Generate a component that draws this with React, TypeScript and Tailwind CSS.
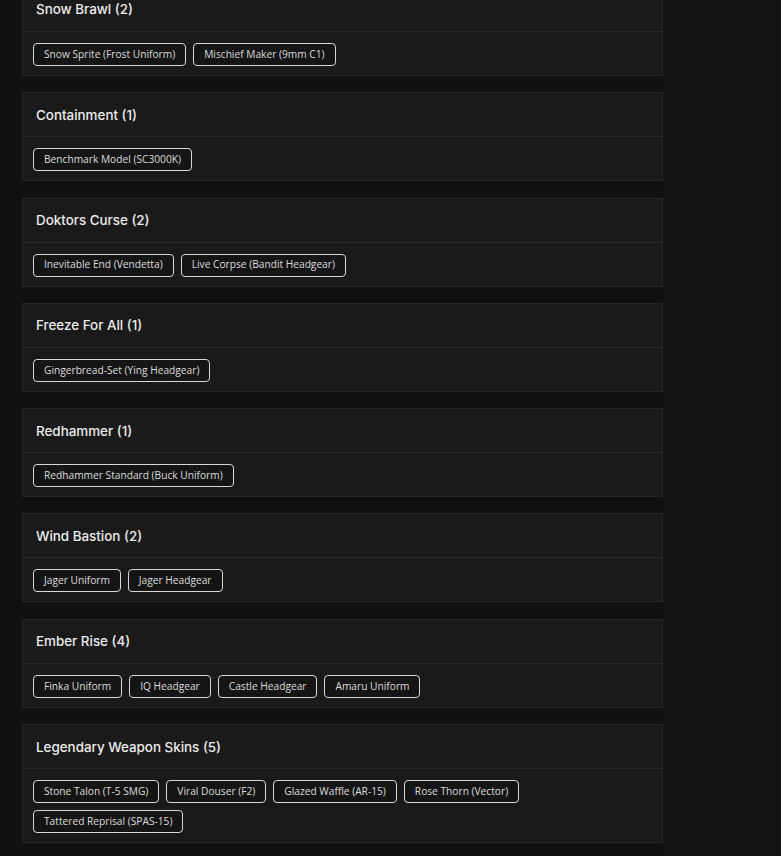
import React from "react";

const groups: { title: string; items: string[] }[] = [
  { title: "Snow Brawl (2)", items: ["Snow Sprite (Frost Uniform)", "Mischief Maker (9mm C1)"] },
  { title: "Containment (1)", items: ["Benchmark Model (SC3000K)"] },
  { title: "Doktors Curse (2)", items: ["Inevitable End (Vendetta)", "Live Corpse (Bandit Headgear)"] },
  { title: "Freeze For All (1)", items: ["Gingerbread-Set (Ying Headgear)"] },
  { title: "Redhammer (1)", items: ["Redhammer Standard (Buck Uniform)"] },
  { title: "Wind Bastion (2)", items: ["Jager Uniform", "Jager Headgear"] },
  { title: "Ember Rise (4)", items: ["Finka Uniform", "IQ Headgear", "Castle Headgear", "Amaru Uniform"] },
  {
    title: "Legendary Weapon Skins (5)",
    items: [
      "Stone Talon (T-5 SMG)",
      "Viral Douser (F2)",
      "Glazed Waffle (AR-15)",
      "Rose Thorn (Vector)",
      "Tattered Reprisal (SPAS-15)",
    ],
  },
];

export default function App() {
  return (
    <div
      className="h-[856px] overflow-hidden bg-[#131313] flex"
      style={{ fontFamily: '"Open Sans", "Noto Sans", sans-serif' }}
    >
      <div className="w-[663px] bg-[#111111] pl-[22px] -mt-[13px] flex flex-col gap-[16.3px]">
        {groups.map((g) => (
          <div key={g.title} className="border border-[#262626] bg-[#1a1a1a]">
            <div className="h-[44px] flex items-center px-[13px] border-b border-[#2a2a2a]">
              <span
                className="text-[13.4px] font-medium text-[#ececec]"
                style={{ fontFamily: 'Inter, "Noto Sans", sans-serif' }}
              >
                {g.title}
              </span>
            </div>
            <div className="px-[10px] pt-[11px] pb-[9px] flex flex-wrap gap-x-[7px] gap-y-[7px]">
              {g.items.map((it) => (
                <span
                  key={it}
                  className="h-[23px] flex items-center px-[10px] border border-[#d8d8d8] rounded-[4px] text-[10.2px] text-[#dcdcdc] bg-[#151515]"
                >
                  {it}
                </span>
              ))}
            </div>
          </div>
        ))}
      </div>
    </div>
  );
}
